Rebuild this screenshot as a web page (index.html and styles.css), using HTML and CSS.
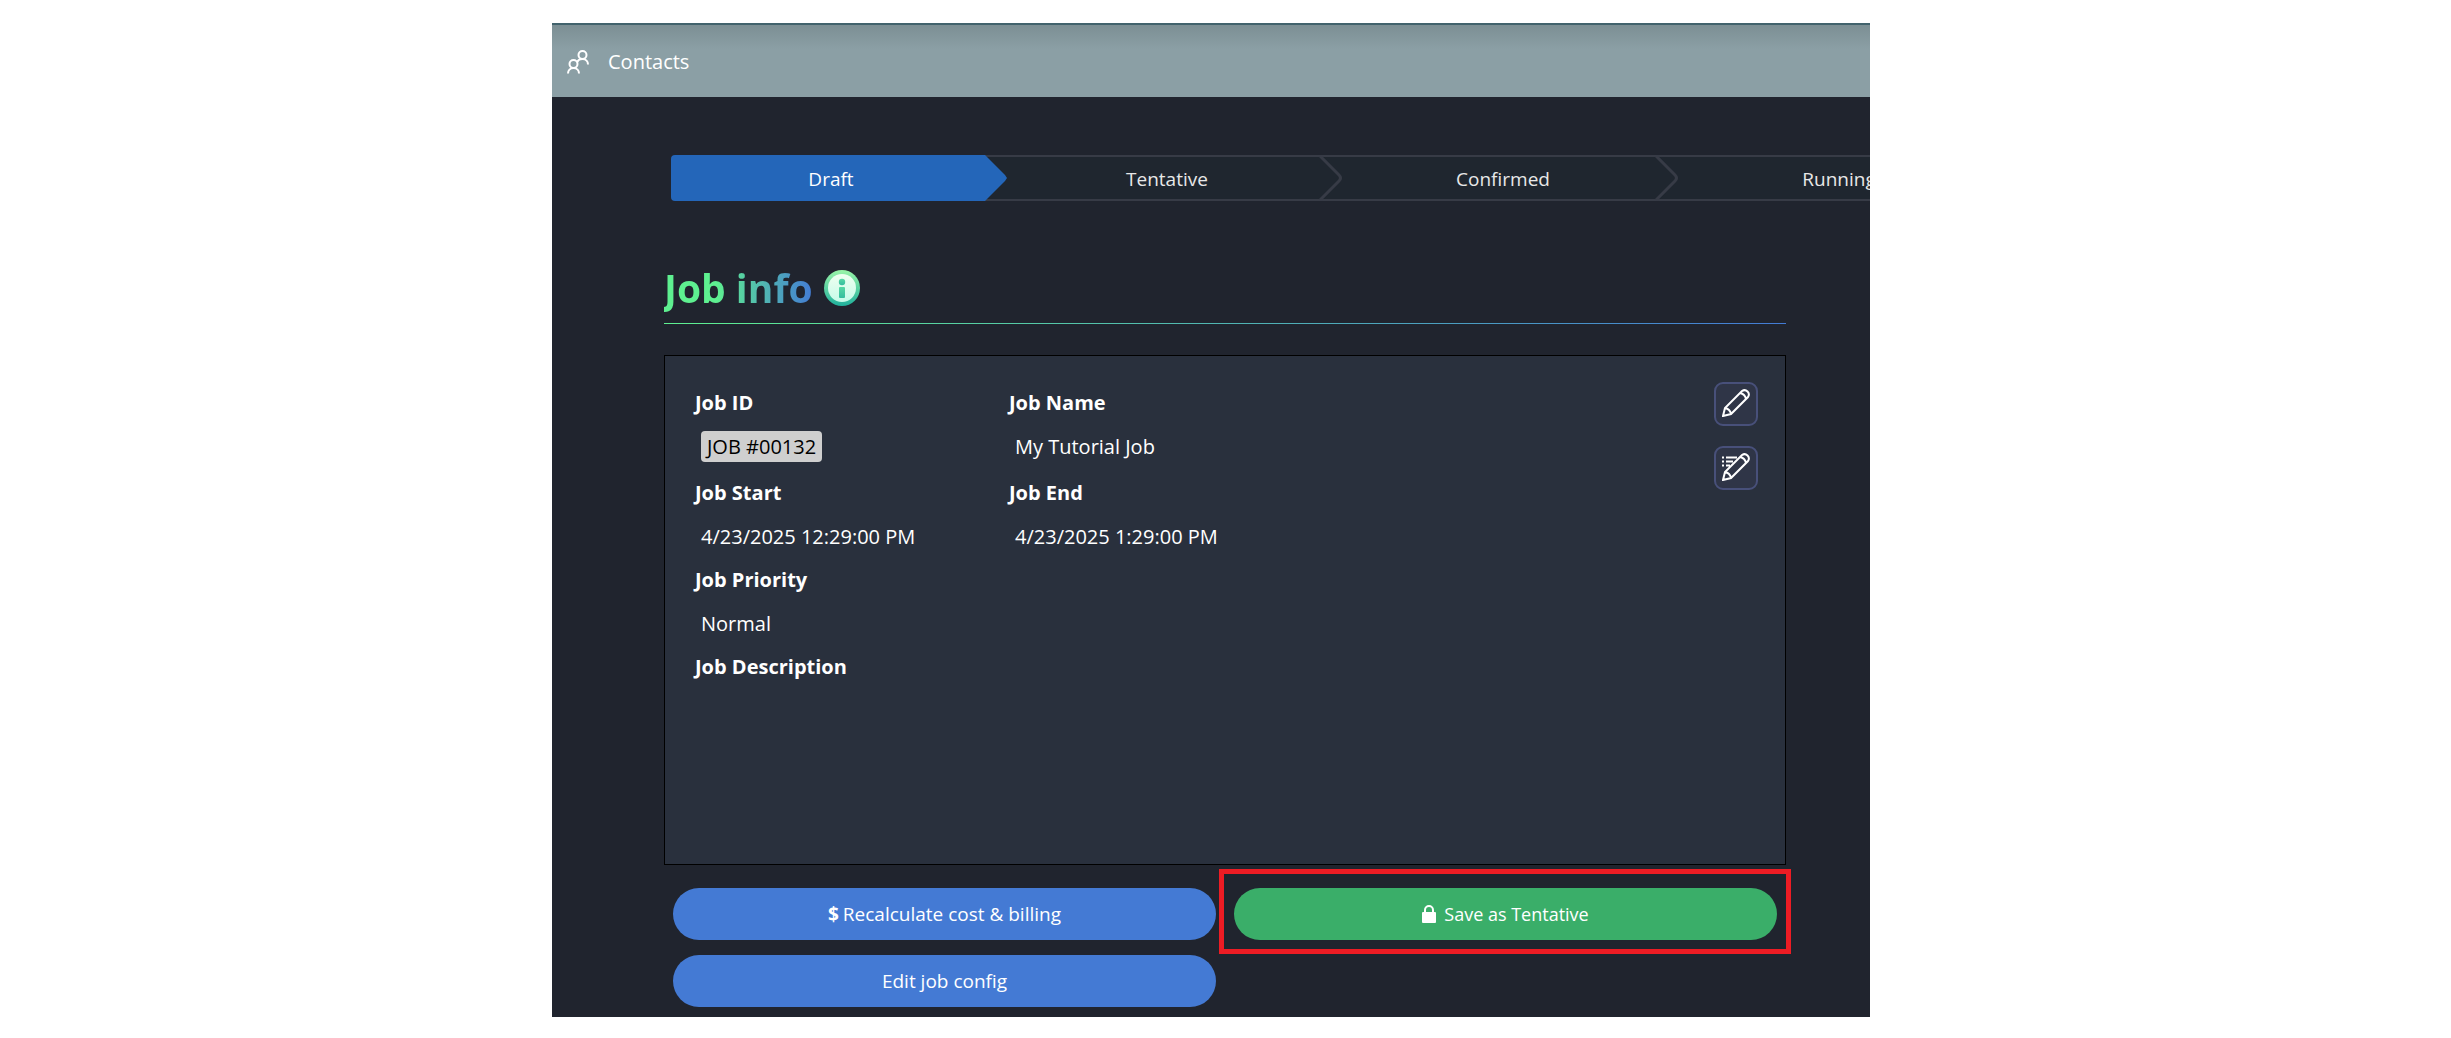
FILE: index.html
```html
<!DOCTYPE html>
<html lang="en">
<head>
<meta charset="utf-8">
<title>Job info</title>
<link rel="stylesheet" href="styles.css">
</head>
<body>
<div class="app">
  <header class="topbar">
    <a class="topbar-link" href="#contacts">
      <svg class="topbar-icon" viewBox="0 0 22 24" aria-hidden="true">
        <circle cx="15.500" cy="5" r="4"/>
        <circle cx="6.500" cy="14" r="4"/>
        <path d="M1 23.500c0-3 2-5.500 5.500-5.500s5.500 2.500 5.500 5.500M10.500 12c.500-2 2.500-3 5-3 3.500 0 5.500 2.500 5.500 5.500"/>
      </svg>
      <span>Contacts</span>
    </a>
  </header>
  <main class="content">
    <ol class="steps">
      <li class="step step-active"><span>Draft</span></li>
      <li class="step"><span>Tentative</span><svg class="step-arrow" viewBox="0 0 24 46" aria-hidden="true"><path d="M1 1 20 20q3 3 0 6L1 45"/></svg></li>
      <li class="step"><span>Confirmed</span><svg class="step-arrow" viewBox="0 0 24 46" aria-hidden="true"><path d="M1 1 20 20q3 3 0 6L1 45"/></svg></li>
      <li class="step"><span>Running</span></li>
    </ol>
    <section class="job">
      <div class="heading">
        <h1>Job info</h1>
        <svg class="info-icon" viewBox="0 0 36 36" role="img" aria-label="Information">
          <defs>
            <linearGradient id="ring" x1="0" y1="0" x2="0" y2="1"><stop offset="0" stop-color="#9af5a8"/><stop offset="1" stop-color="#1fb09c"/></linearGradient>
            <linearGradient id="disc" x1="0" y1="0" x2="0" y2="1"><stop offset="0" stop-color="#effff0"/><stop offset="1" stop-color="#c5fbe9"/></linearGradient>
            <linearGradient id="glyph" x1="0" y1="0" x2="0" y2="1"><stop offset="0" stop-color="#56d8a4"/><stop offset="1" stop-color="#35bd9f"/></linearGradient>
          </defs>
          <circle cx="18" cy="18" r="18" fill="url(#ring)"/>
          <circle cx="18" cy="18" r="14" fill="url(#disc)"/>
          <circle cx="18" cy="12" r="3.200" fill="url(#glyph)"/>
          <rect x="15" y="17" width="6" height="11" rx="1" fill="url(#glyph)"/>
        </svg>
      </div>
      <div class="card">
        <dl class="fields">
          <div class="field"><dt>Job ID</dt><dd><span class="badge">JOB #00132</span></dd></div>
          <div class="field"><dt>Job Name</dt><dd>My Tutorial Job</dd></div>
          <div class="field"><dt>Job Start</dt><dd>4/23/2025 12:29:00 PM</dd></div>
          <div class="field"><dt>Job End</dt><dd>4/23/2025 1:29:00 PM</dd></div>
          <div class="field field-wide"><dt>Job Priority</dt><dd>Normal</dd></div>
          <div class="field field-wide"><dt>Job Description</dt><dd></dd></div>
        </dl>
        <div class="tools">
          <button class="tool" type="button" aria-label="Edit job">
            <svg viewBox="0 0 28 28" aria-hidden="true"><path d="M1 27 3 19 20 2q3-2 5.500.500t.500 5.500L9 25ZM3 19q5 1 6 6M18 4q5 1 6 6"/></svg>
          </button>
          <button class="tool" type="button" aria-label="Edit job details">
            <svg viewBox="0 0 28 28" aria-hidden="true"><path d="M1 27 3 19 20 2q3-2 5.500.500t.500 5.500L9 25ZM3 19q5 1 6 6M18 4q5 1 6 6M0 4.500h2M4 4.500h11M0 8.500h2M4 8.500h7M0 12.500h2M4 12.500h4"/></svg>
          </button>
        </div>
      </div>
      <div class="actions">
        <button class="action" type="button"><b>$</b> Recalculate cost &amp; billing</button>
        <div class="highlighted">
          <button class="action action-save" type="button">
            <svg class="lock" viewBox="0 0 14 18" aria-hidden="true"><path d="M3 8V5a4 4 0 0 1 8 0v3" fill="none" stroke="#fff" stroke-width="2"/><rect y="7" width="14" height="11" rx="1" fill="#fff"/></svg>
            Save as Tentative
          </button>
        </div>
        <button class="action" type="button">Edit job config</button>
      </div>
    </section>
  </main>
</div>
</body>
</html>
```
FILE: styles.css
```css
* { box-sizing: border-box; }

body {
  margin: 0;
  padding: 23px 0 20px;
  display: grid;
  grid-template-columns: 552fr 1318fr 581fr;
  background: #fff;
  color: #fff;
  font: 20px/28px "Open Sans", "Noto Sans", sans-serif;
}

.app {
  grid-column: 2;
  min-width: 0;
  overflow: hidden;
  background: #20242e;
}

.topbar {
  display: flex;
  align-items: center;
  height: 74px;
  padding: 2px 15px 0;
  border-top: 2px solid #42636d;
  background: linear-gradient(#7c8f94, #8b9fa5 24px);
}

.topbar-link {
  display: flex;
  align-items: center;
  gap: 19px;
  color: #fff;
  text-decoration: none;
}

.topbar-icon {
  width: 22px;
  height: 24px;
  fill: none;
  stroke: #fff;
  stroke-width: 2;
}

.content { padding: 58px 84px 10px 112px; }

.steps {
  display: flex;
  width: 120%;
  margin: 0 0 0 7px;
  padding: 0;
  list-style: none;
  font-size: 19px;
}

.step {
  position: relative;
  flex: 0 0 336px;
  height: 46px;
  padding: 0 16px 0 0;
  border: solid #373b46;
  border-width: 2px 0;
  background: #1f262f;
  color: #e8e8e8;
  line-height: 44px;
  text-align: center;
}

.step-active {
  z-index: 1;
  border: 0;
  border-radius: 4px 0 0 4px;
  background: #2466b9;
  color: #fff;
  line-height: 48px;
  clip-path: polygon(0 0, 314px 0, 334px 20px, 336px 23px, 334px 26px, 314px 100%, 0 100%);
}

/* runs under the point of the active step */
.step-active + .step {
  flex-basis: 358px;
  margin-left: -22px;
  padding-left: 22px;
}

.step-arrow {
  position: absolute;
  top: -2px;
  right: 0;
  z-index: 1;
  width: 24px;
  height: 46px;
  fill: none;
  stroke: #373b46;
  stroke-width: 3;
}

.heading {
  display: flex;
  align-items: center;
  gap: 11px;
  height: 72px;
  margin: 51px 0 31px;
  border-bottom: 1px solid;
  border-image: linear-gradient(90deg, #5ef090, #437bd5) 1;
}

h1 {
  margin: 0;
  font-size: 39px;
  line-height: 56px;
  font-weight: 700;
  background: linear-gradient(90deg, #5ef090 35%, #437bd5);
  background-clip: text;
  -webkit-background-clip: text;
  color: transparent;
}

.info-icon { width: 36px; height: 36px; }

.card {
  display: flex;
  justify-content: space-between;
  min-height: 510px;
  padding: 26px 27px 26px 30px;
  border: 1px solid #000;
  background: #29303d;
}

.fields {
  display: grid;
  flex: 1;
  grid-template-columns: 314px 1fr;
  align-content: start;
  margin: 0;
}

.field-wide { grid-column: 1 / -1; }

dt { height: 44px; padding-top: 7px; font-weight: 700; }

dd { min-height: 43px; margin: 0; padding: 7px 0 0 6px; }

.badge {
  display: inline-block;
  margin: -2px 0 10px;
  padding: 2px 6px 1px;
  border-radius: 4px;
  background: #cfcfcf;
  color: #000;
}

.tools { display: grid; gap: 20px; align-content: start; }

.tool {
  display: grid;
  place-items: center;
  width: 44px;
  height: 44px;
  padding: 0 0 2px;
  border: 2px solid #48507a;
  border-radius: 9px;
  background: #2f3547;
}

.tool svg {
  width: 28px;
  height: 28px;
  fill: none;
  stroke: #fff;
  stroke-width: 2;
}

.actions {
  display: grid;
  grid-template-columns: 1fr 1fr;
  gap: 15px 18px;
  padding: 23px 9px 0;
}

.action {
  display: flex;
  align-items: center;
  justify-content: center;
  gap: 4px;
  width: 100%;
  height: 52px;
  padding: 0;
  border: 0;
  border-radius: 26px;
  background: #447ad4;
  color: #fff;
  font: inherit;
  font-size: 19px;
}

.action-save {
  gap: 8px;
  background: #3aae69;
  font-size: 18px;
}

.lock { width: 14px; height: 18px; }

.highlighted { position: relative; }

.highlighted::after {
  content: "";
  position: absolute;
  inset: -19px -14px -14px -15px;
  border: 5px solid #ed1c24;
  pointer-events: none;
}
```
